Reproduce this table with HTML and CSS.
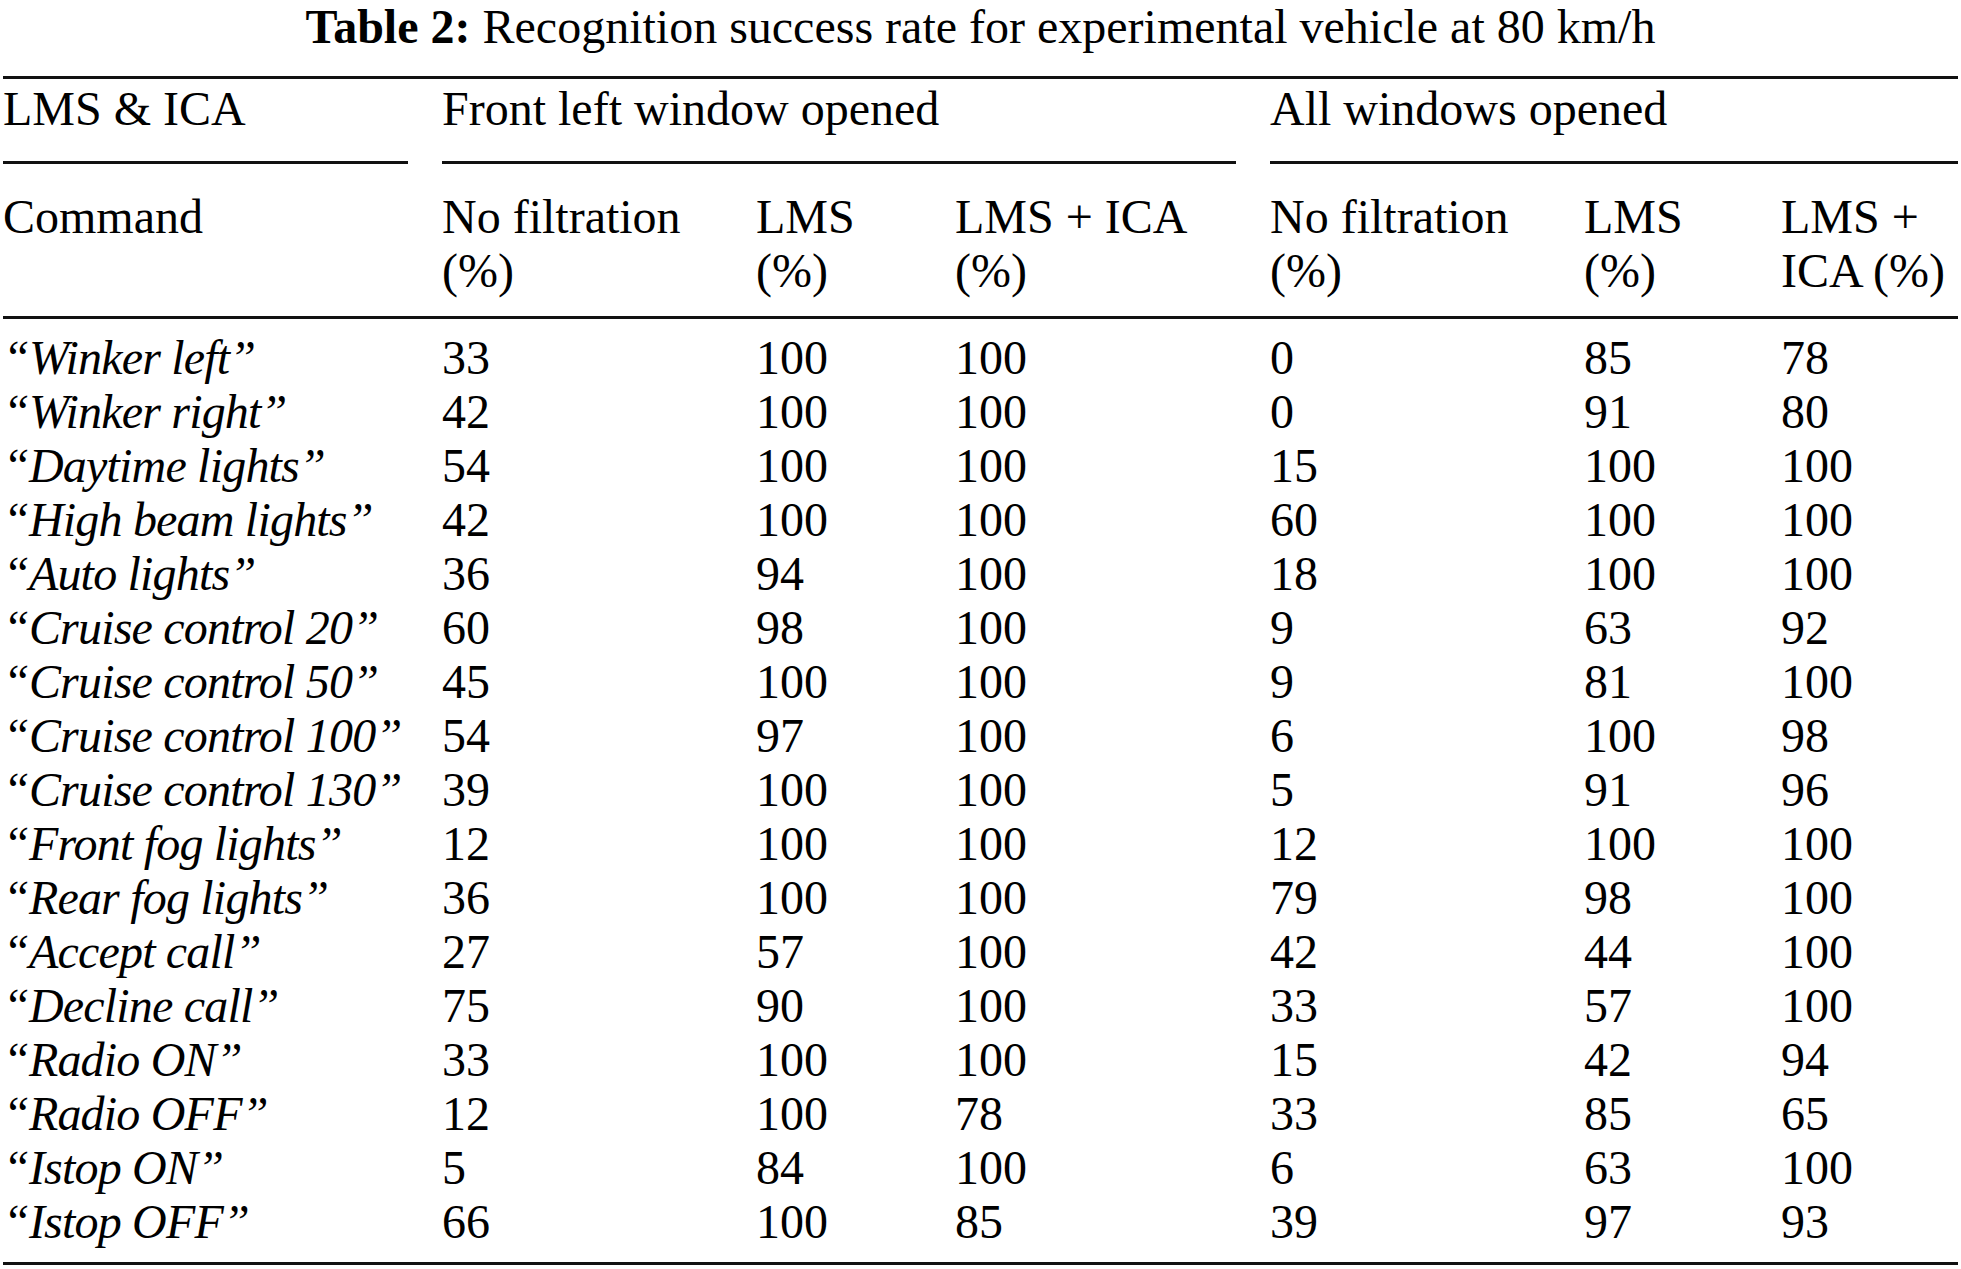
FILE: index.html
```html
<!DOCTYPE html>
<html lang="en">
<head>
<meta charset="utf-8">
<title>Table 2</title>
<link rel="stylesheet" href="styles.css">
</head>
<body>
<div class="caption"><b class="label">Table 2:</b> Recognition success rate for experimental vehicle at 80 km/h</div>
<div class="tbl">
  <div class="thead">
    <div class="group">LMS &amp; ICA</div>
    <div class="group span3">Front left window opened</div>
    <div class="group span3">All windows opened</div>
    <div class="sub">Command</div>
    <div class="sub">No filtration (%)</div>
    <div class="sub">LMS (%)</div>
    <div class="sub">LMS + ICA (%)</div>
    <div class="sub">No filtration (%)</div>
    <div class="sub">LMS (%)</div>
    <div class="sub">LMS + ICA (%)</div>
  </div>
  <div class="tbody">
    <div class="cmd">“Winker left”</div><div>33</div><div>100</div><div>100</div><div>0</div><div>85</div><div>78</div>
    <div class="cmd">“Winker right”</div><div>42</div><div>100</div><div>100</div><div>0</div><div>91</div><div>80</div>
    <div class="cmd">“Daytime lights”</div><div>54</div><div>100</div><div>100</div><div>15</div><div>100</div><div>100</div>
    <div class="cmd">“High beam lights”</div><div>42</div><div>100</div><div>100</div><div>60</div><div>100</div><div>100</div>
    <div class="cmd">“Auto lights”</div><div>36</div><div>94</div><div>100</div><div>18</div><div>100</div><div>100</div>
    <div class="cmd">“Cruise control 20”</div><div>60</div><div>98</div><div>100</div><div>9</div><div>63</div><div>92</div>
    <div class="cmd">“Cruise control 50”</div><div>45</div><div>100</div><div>100</div><div>9</div><div>81</div><div>100</div>
    <div class="cmd">“Cruise control 100”</div><div>54</div><div>97</div><div>100</div><div>6</div><div>100</div><div>98</div>
    <div class="cmd">“Cruise control 130”</div><div>39</div><div>100</div><div>100</div><div>5</div><div>91</div><div>96</div>
    <div class="cmd">“Front fog lights”</div><div>12</div><div>100</div><div>100</div><div>12</div><div>100</div><div>100</div>
    <div class="cmd">“Rear fog lights”</div><div>36</div><div>100</div><div>100</div><div>79</div><div>98</div><div>100</div>
    <div class="cmd">“Accept call”</div><div>27</div><div>57</div><div>100</div><div>42</div><div>44</div><div>100</div>
    <div class="cmd">“Decline call”</div><div>75</div><div>90</div><div>100</div><div>33</div><div>57</div><div>100</div>
    <div class="cmd">“Radio ON”</div><div>33</div><div>100</div><div>100</div><div>15</div><div>42</div><div>94</div>
    <div class="cmd">“Radio OFF”</div><div>12</div><div>100</div><div>78</div><div>33</div><div>85</div><div>65</div>
    <div class="cmd">“Istop ON”</div><div>5</div><div>84</div><div>100</div><div>6</div><div>63</div><div>100</div>
    <div class="cmd">“Istop OFF”</div><div>66</div><div>100</div><div>85</div><div>39</div><div>97</div><div>93</div>
  </div>
</div>
</body>
</html>
```
FILE: styles.css
```css
html, body {
  margin: 0;
  padding: 0;
  background: #ffffff;
}
body {
  font-family: "Liberation Serif", "Times New Roman", serif;
  color: #000000;
  padding: 0 3px;
}
.caption {
  font-size: 48px;
  line-height: 54px;
  height: 54px;
  text-align: center;
  margin: 0 0 22px 0;
  white-space: nowrap;
}
.caption .label {
  font-weight: bold;
}
.tbl {
  font-size: 48px;
  line-height: 54px;
  width: 1955px;
}
.thead,
.tbody {
  display: grid;
  grid-template-columns: 405px 280px 165px 281px 280px 163px 177px;
  column-gap: 34px;
}
.thead {
  border-top: 3px solid #111;
  border-bottom: 3px solid #111;
  padding-bottom: 18px;
}
.group {
  padding: 3px 0 25px 0;
  border-bottom: 3px solid #111;
  white-space: nowrap;
}
.span3 {
  grid-column: span 3;
}
.sub {
  padding-top: 26px;
}
.tbody {
  padding: 12px 0 13px 0;
  border-bottom: 3px solid #111;
}
.cmd {
  font-style: italic;
  letter-spacing: -0.8px;
  white-space: nowrap;
}
```
